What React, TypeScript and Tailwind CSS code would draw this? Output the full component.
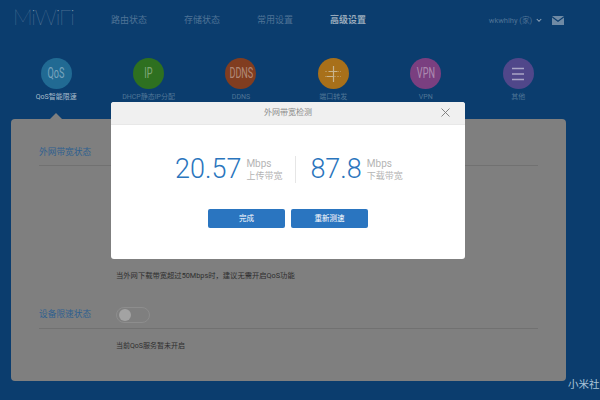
import React from 'react';

const FONT = "font-['Roboto','Noto_Sans_CJK_SC',sans-serif]";

const apps = [
  { label: 'QoS智能限速', text: 'QoS', bg: 'bg-[#216a93]', active: true },
  { label: 'DHCP静态IP分配', text: 'IP', bg: 'bg-[#2e7020]' },
  { label: 'DDNS', text: 'DDNS', bg: 'bg-[#813d20]' },
  { label: '端口转发', icon: 'port', bg: 'bg-[#a8701a]' },
  { label: 'VPN', text: 'VPN', bg: 'bg-[#7a3f80]' },
  { label: '其他', icon: 'more', bg: 'bg-[#50478a]' },
];

const navs = ['路由状态', '存储状态', '常用设置', '高级设置'];

const PortIcon = () => (
  <svg viewBox="0 0 30 30" className="w-[30px] h-[30px]" fill="none" stroke="#c9b48e">
    <path d="M7 12.5h16M7 17.5h16" strokeDasharray="2 1" strokeOpacity="0.5" />
    <path d="M15.5 7v16M11 12.5h8M9 17.5h6" strokeWidth="1.2" />
  </svg>
);

const MoreIcon = () => (
  <svg viewBox="0 0 30 30" className="w-[30px] h-[30px]" fill="none" stroke="#a9a5c6" strokeWidth="1.3">
    <path d="M9 9.5h12M9 15h12M9 20.5h12" />
  </svg>
);

const Stat = ({ value, label }: { value: string; label: string }) => (
  <div className="flex items-center gap-[5px]">
    <span className="text-[27px] leading-none font-light text-[#2a75bd]">{value}</span>
    <div className="flex flex-col text-[9px] text-[#b4b4b4] leading-[13px]">
      <span className="text-[10px]">Mbps</span>
      <span>{label}</span>
    </div>
  </div>
);

export default function App() {
  return (
    <div className={`${FONT} relative w-[600px] h-[400px] overflow-hidden bg-[#0b3d6e]`}>
      <header className="h-[41px] flex items-center relative">
        <div className="w-[111px] pl-[13px] text-[22px] leading-none font-thin tracking-[-0.05em] text-[#8ba0b5] font-['Lato',sans-serif] -mt-[8px]">MiWiFi</div>
        <nav className="flex gap-[38px] text-[9px] text-[#4f7396] h-full items-center">
          {navs.map((n, i) => (
            <span key={n} className={`w-[35px] whitespace-nowrap ${i === 3 ? 'text-[#98aabb] font-bold' : ''}`}>{n}</span>
          ))}
        </nav>
        <div className="ml-auto flex items-center pr-[36px] text-[7.5px] text-[#4f7396]">
          <span>wkwhlhy (家)</span>
          <svg viewBox="0 0 8 6" className="w-[6px] h-[5px] ml-[4px]" fill="none" stroke="#8ea3b8" strokeWidth="1.4"><path d="M1 1l3 3 3-3" /></svg>
          <svg viewBox="0 0 12 9" className="w-[12px] h-[9px] ml-[10px]"><path d="M0 0h12L6 4.5z M0 1.5v7.5h12V1.5L6 6z" fill="#6f8aa5" /></svg>
        </div>
      </header>

      <div className="flex pl-[10px] pt-[17px]">
        {apps.map((a) => (
          <div key={a.label} className="w-[92.4px] flex flex-col items-center">
            <div className={`w-[31px] h-[31px] rounded-full flex items-center justify-center ${a.bg}`}>
              {a.text && <span className="text-[14px] text-white/40 scale-x-[0.65] whitespace-nowrap">{a.text}</span>}
              {a.icon === 'port' && <PortIcon />}
              {a.icon === 'more' && <MoreIcon />}
            </div>
            <span className={`mt-[3px] text-[7px] leading-[10px] whitespace-nowrap ${a.active ? 'text-[#a8bccb]' : 'text-[#4f7596]'}`}>{a.label}</span>
          </div>
        ))}
      </div>

      <div className="relative mt-[17px] mx-[11px] w-[555px] h-[262px] bg-[#7f7f7f] rounded-[4px] px-[28px]">
        <div className="absolute -top-[6px] left-[39px] w-0 h-0 border-x-[6px] border-x-transparent border-b-[6px] border-b-[#7f7f7f]" />
        <div className="h-[47px] pt-[26px] border-b border-[#717171] text-[8.7px] leading-[14px] text-[#2f5f8f]">外网带宽状态</div>
        <div className="h-[105px]" />
        <p className="pl-[77px] text-[7.3px] leading-[10px] text-[#2e2e2e]">当外网下载带宽超过50Mbps时，建议无需开启QoS功能</p>
        <div className="mt-[15px] h-[33px] flex items-center border-b border-[#717171] pt-[5px]">
          <span className="w-[77px] text-[8.7px] text-[#2f5f8f]">设备限速状态</span>
          <div className="w-[34px] h-[16px] rounded-full border border-[#8d8d8d] flex items-center px-[1px]">
            <div className="w-[12px] h-[12px] rounded-full bg-[#a3a3a3] ml-[1px]" />
          </div>
        </div>
        <p className="mt-[12px] pl-[77px] text-[7px] leading-[10px] text-[#2e2e2e]">当前QoS服务暂未开启</p>
      </div>

      <div className="absolute left-[111px] top-[102px] w-[354px] h-[157px] bg-white rounded-[3px] overflow-hidden">
        <div className="h-[23px] bg-[#f0f0f0] border-b border-[#e8e8e8] flex items-center justify-center relative text-[8px] text-[#8a8a8a]">
          外网带宽检测
          <svg viewBox="0 0 9 9" className="absolute right-[15px] top-[6px] w-[9px] h-[9px]" fill="none" stroke="#777" strokeWidth="0.9"><path d="M0.5 0.5l8 8M8.5 0.5l-8 8" /></svg>
        </div>
        <div className="flex items-center mt-[31px] pl-[64px] h-[27px]">
          <Stat value="20.57" label="上传带宽" />
          <div className="w-px h-[27px] bg-[#e6e6e6] ml-[13px] mr-[14px]" />
          <Stat value="87.8" label="下载带宽" />
        </div>
        <div className="flex gap-[6px] mt-[26px] pl-[97px]">
          <button className="w-[77px] h-[19px] rounded-[2px] bg-[#2a75c0] text-[7.5px] text-white">完成</button>
          <button className="w-[77px] h-[19px] rounded-[2px] bg-[#2a75c0] text-[7.5px] text-white">重新测速</button>
        </div>
      </div>

      <div className="absolute left-[568px] top-[378px] text-[10.5px] leading-[14px] whitespace-nowrap text-[#a9c3d8]">小米社</div>
    </div>
  );
}
